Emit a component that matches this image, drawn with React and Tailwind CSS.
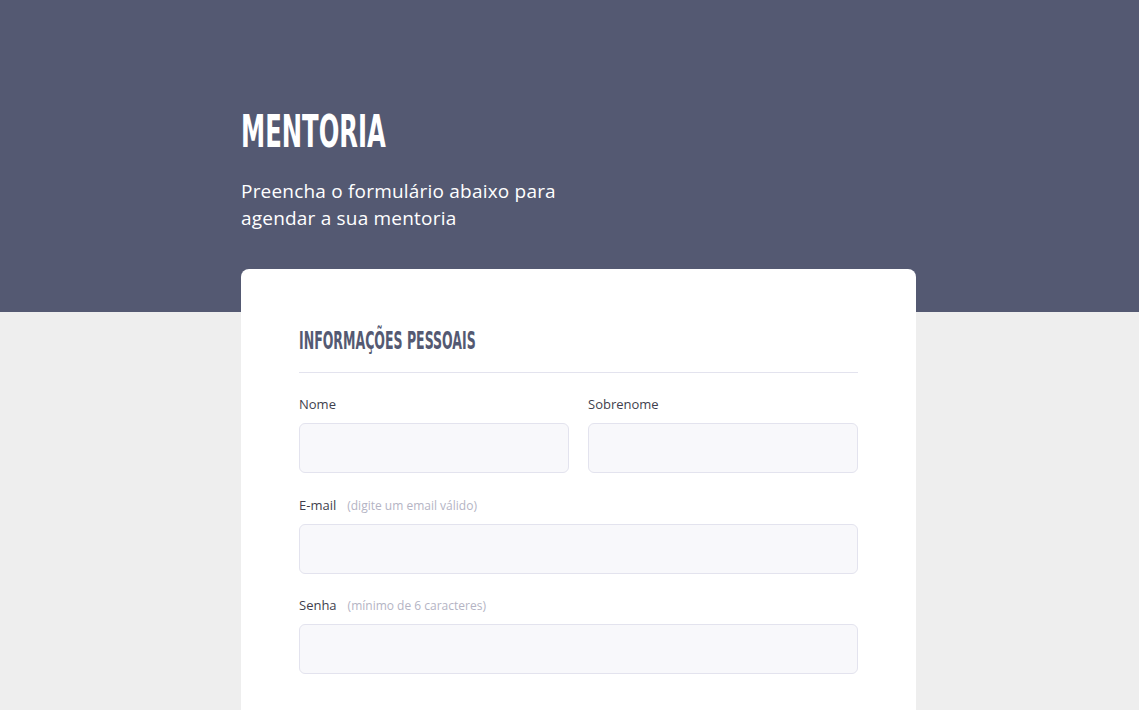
export default function App() {
  const body = { fontFamily: '"Open Sans", "Liberation Sans", sans-serif' };
  const head = { fontFamily: '"Liberation Sans Narrow", "DejaVu Sans Condensed", sans-serif' };
  const Label = ({ text, hint }) => (
    <div className="flex items-baseline h-[19px] mb-[9px]">
      <span className="text-[13px] text-[#3f3f4e]">{text}</span>
      {hint && <span className="ml-[11px] text-[12px] text-[#b4b4c4]">{hint}</span>}
    </div>
  );
  const Input = () => (
    <div className="h-[50px] rounded-md border border-[#e3e3ee] bg-[#f8f8fb]" />
  );
  return (
    <div className="min-h-[710px] bg-[#eeeeee] pl-[18px]" style={body}>
      <div className="h-[312px] bg-[#545972] -ml-[18px] pl-[18px]">
        <div className="w-[675px] mx-auto pt-[104px]">
          <h1
            className="text-[45px] leading-[56px] font-bold text-white uppercase origin-left scale-x-[0.6] whitespace-nowrap"
            style={head}
          >
            Mentoria
          </h1>
          <p className="mt-[18px] text-[19px] leading-[27px] tracking-[0.2px] text-white w-[360px]">
            Preencha o formulário abaixo para agendar a sua mentoria
          </p>
        </div>
      </div>
      <div className="w-[675px] mx-auto -mt-[43px] bg-white rounded-lg px-[58px] relative">
        <div className="pt-[58px]">
          <h2
            className="text-[24px] leading-[28px] font-bold text-[#545972] uppercase origin-left scale-x-[0.58] whitespace-nowrap"
            style={head}
          >
            Informações pessoais
          </h2>
          <div className="mt-[17px] h-px bg-[#e3e3ee]" />
          <div className="mt-[22px] grid grid-cols-2 gap-x-[19px]">
            <div>
              <Label text="Nome" />
              <Input />
            </div>
            <div>
              <Label text="Sobrenome" />
              <Input />
            </div>
          </div>
          <div className="mt-[23px]">
            <Label text="E-mail" hint="(digite um email válido)" />
            <Input />
          </div>
          <div className="mt-[22px]">
            <Label text="Senha" hint="(mínimo de 6 caracteres)" />
            <Input />
          </div>
          <div className="h-[60px]" />
        </div>
      </div>
    </div>
  );
}
